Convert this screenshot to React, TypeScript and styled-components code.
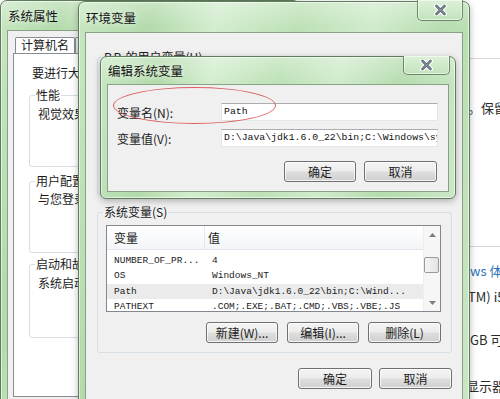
import React from 'react';
import styled, { createGlobalStyle } from 'styled-components';

const Global = createGlobalStyle`
  html, body { margin: 0; padding: 0; background: #fff; }
  body {
    font-family: "Noto Sans CJK SC", "Noto Sans", sans-serif;
    font-size: 12px;
    color: #1b1b1b;
  }
`;

const CJK = `"Noto Sans CJK SC", "Noto Sans", sans-serif`;
const MONO = `"Liberation Mono", "DejaVu Sans Mono", monospace`;

const Desktop = styled.div`
  position: relative;
  width: 500px;
  height: 399px;
  overflow: hidden;
  background: #fff;
`;

/* ---------- background control-panel page ---------- */
const Page = styled.div`
  position: absolute;
  left: 462px;
  top: 0;
  width: 60px;
  height: 399px;
  background: #fff;
  display: flex;
  flex-direction: column;
  font-family: ${CJK};
  font-size: 13px;
  color: #2a2a2a;
`;
const PageRule = styled.div<{ $mt: number }>`
  margin-top: ${p => p.$mt}px;
  height: 1px;
  background: #d6d6d6;
  flex: none;
`;
const PageText = styled.div<{ $mt: number; $ml: number; $blue?: boolean }>`
  margin-top: ${p => p.$mt}px;
  margin-left: ${p => p.$ml}px;
  height: 16px;
  line-height: 16px;
  white-space: nowrap;
  color: ${p => (p.$blue ? '#2f73b7' : '#2a2a2a')};
  flex: none;
`;

/* ---------- window chrome ---------- */
const Frame = styled.section<{ $x: number; $y: number; $w: number; $h: number }>`
  position: absolute;
  left: ${p => p.$x}px;
  top: ${p => p.$y}px;
  width: ${p => p.$w}px;
  height: ${p => p.$h}px;
  box-sizing: border-box;
  border: 1px solid #5f7d5c;
  border-radius: 7px 7px 6px 6px;
  padding: 0 6px 6px 6px;
  display: flex;
  flex-direction: column;
  background:
    linear-gradient(180deg, rgba(255, 255, 255, 0.3), rgba(255, 255, 255, 0) 26px),
    linear-gradient(100deg, #c8e7c3 0%, #b2daaa 16%, #d3edcf 30%, #bde1b6 48%, #d0ebcc 64%, #b6dcaf 80%, #cbe8c6 100%);
  box-shadow: inset 0 0 0 1px rgba(255, 255, 255, 0.55), 0 2px 7px rgba(0, 0, 0, 0.28);
`;

const TitleBar = styled.header<{ $h: number }>`
  height: ${p => p.$h}px;
  flex: none;
  display: flex;
  align-items: center;
  padding-left: 1px;
  font-family: ${CJK};
  font-size: 12.5px;
  color: #111;
  text-shadow: 0 0 6px rgba(255, 255, 255, 0.9);
`;

const CloseButton = styled.div<{ $right: number; $top: number; $w: number; $h: number }>`
  position: absolute;
  right: ${p => p.$right}px;
  top: ${p => p.$top}px;
  width: ${p => p.$w}px;
  height: ${p => p.$h}px;
  box-sizing: border-box;
  border: 1px solid #6b8868;
  border-top: none;
  border-radius: 0 0 5px 5px;
  background: linear-gradient(180deg, #dcf1d8, #c1e3bb);
  box-shadow: inset 0 0 0 1px rgba(255, 255, 255, 0.55);
  display: flex;
  align-items: center;
  justify-content: center;
`;

const Client = styled.div`
  flex: 1;
  min-height: 0;
  box-sizing: border-box;
  border: 1px solid #87a385;
  background: #f0f0f0;
  display: flex;
  flex-direction: column;
  overflow: hidden;
`;

const CloseGlyph = () => (
  <svg width="15" height="12" viewBox="0 0 15 12">
    <path d="M3.5 2 L11.5 10 M11.5 2 L3.5 10" stroke="#ffffff" strokeWidth="5" strokeLinecap="round" />
    <path d="M3.5 2 L11.5 10 M11.5 2 L3.5 10" stroke="#5d6a73" strokeWidth="2.6" strokeLinecap="round" />
    <path d="M3.5 2 L11.5 10 M11.5 2 L3.5 10" stroke="#9aa6ad" strokeWidth="0.9" strokeLinecap="round" />
  </svg>
);

/* ---------- controls ---------- */
const Button = styled.button<{ $w: number }>`
  width: ${p => p.$w}px;
  height: 21px;
  flex: none;
  box-sizing: border-box;
  padding: 0;
  border: 1px solid #707070;
  border-radius: 3px;
  background: linear-gradient(180deg, #f4f4f4 0%, #ececec 48%, #dedede 52%, #d0d0d0 100%);
  box-shadow: inset 0 0 0 1px rgba(255, 255, 255, 0.75);
  font-family: ${CJK};
  font-size: 12px;
  color: #1b1b1b;
  line-height: 19px;
`;

const ButtonRow = styled.div<{ $mt: number; $pr: number; $gap: number }>`
  display: flex;
  justify-content: flex-end;
  gap: ${p => p.$gap}px;
  margin-top: ${p => p.$mt}px;
  padding-right: ${p => p.$pr}px;
  flex: none;
`;

const Group = styled.fieldset<{ $h: number; $pl: number; $pr: number; $mt?: number }>`
  margin: ${p => p.$mt || 0}px 0 0 0;
  height: ${p => p.$h}px;
  box-sizing: border-box;
  flex: none;
  border: 1px solid #d5dfe5;
  border-radius: 3px;
  padding: 0 ${p => p.$pr}px 0 ${p => p.$pl}px;
  min-width: 0;
`;

const Legend = styled.legend<{ $ml: number }>`
  padding: 0 1px;
  margin-left: ${p => p.$ml}px;
  line-height: 14px;
  font-family: ${CJK};
  font-size: 12px;
  white-space: nowrap;
  color: #1b1b1b;
`;

/* ---------- system properties (behind) ---------- */
const SysClient = styled(Client)`
  padding: 6px 0 0 5px;
`;
const Tabs = styled.div`
  display: flex;
  height: 16px;
  margin-left: 2px;
  flex: none;
`;
const Tab = styled.div<{ $active?: boolean }>`
  box-sizing: border-box;
  height: 16px;
  padding: 0 5px;
  border: 1px solid #898c95;
  border-bottom: none;
  border-radius: 2px 2px 0 0;
  background: ${p => (p.$active ? '#ffffff' : 'linear-gradient(#f3f3f3, #e4e4e4)')};
  line-height: 14px;
  font-family: ${CJK};
  font-size: 12px;
  white-space: nowrap;
`;
const TabPanel = styled.div`
  height: 344px;
  flex: none;
  box-sizing: border-box;
  border: 1px solid #898c95;
  background: #fff;
  padding: 12px 0 0 15px;
  display: flex;
  flex-direction: column;
  overflow: hidden;
`;
const Line = styled.div<{ $mt?: number; $ml?: number }>`
  margin-top: ${p => p.$mt || 0}px;
  margin-left: ${p => p.$ml || 0}px;
  line-height: 14px;
  height: 14px;
  white-space: nowrap;
  font-family: ${CJK};
  font-size: 12px;
  color: #1b1b1b;
`;
const SysGroup = styled(Group)`
  width: 300px;
`;

/* ---------- environment variables ---------- */
const EnvBody = styled.div`
  padding: 17px 10px 0 11px;
  display: flex;
  flex-direction: column;
`;

const ListView = styled.div`
  width: 335px;
  height: 87px;
  margin-top: 6px;
  box-sizing: border-box;
  border: 1px solid #828790;
  background: #fff;
  display: grid;
  grid-template-columns: 1fr 17px;
  overflow: hidden;
  flex: none;
`;
const ListMain = styled.div`
  overflow: hidden;
  display: flex;
  flex-direction: column;
`;
const HeaderRow = styled.div`
  display: grid;
  grid-template-columns: 98px 1fr;
  height: 24px;
  flex: none;
  box-sizing: border-box;
  border-bottom: 1px solid #e3e6ea;
  background: linear-gradient(180deg, #ffffff, #f3f5f8);
  margin-bottom: 2.5px;
`;
const HeaderCell = styled.div<{ $pl: number; $divider?: boolean }>`
  display: flex;
  align-items: center;
  padding-left: ${p => p.$pl}px;
  border-right: ${p => (p.$divider ? '1px solid #e3e6ea' : 'none')};
  font-family: ${CJK};
  font-size: 12px;
  color: #1b1b1b;
`;
const Row = styled.div<{ $sel?: boolean }>`
  display: grid;
  grid-template-columns: 98px 1fr;
  height: 15.5px;
  flex: none;
  align-items: center;
  background: ${p => (p.$sel ? '#ebebeb' : 'transparent')};
  font-family: ${MONO};
  font-size: 9.5px;
  color: #1b1b1b;
  white-space: nowrap;
`;
const Cell = styled.div<{ $pl: number }>`
  padding-left: ${p => p.$pl}px;
  overflow: hidden;
`;
const ScrollBar = styled.div`
  display: flex;
  flex-direction: column;
  background: #f6f6f6;
  border-left: 1px solid #eeeeee;
`;
const ScrollArrow = styled.div`
  height: 17px;
  flex: none;
  display: flex;
  align-items: center;
  justify-content: center;
`;
const ScrollTrack = styled.div`
  flex: 1;
  padding: 14px 0 0 0;
`;
const Thumb = styled.div`
  width: 15px;
  height: 16px;
  box-sizing: border-box;
  border: 1px solid #9a9a9a;
  border-radius: 2px;
  background: linear-gradient(90deg, #f5f5f5, #e3e3e3);
`;

/* ---------- edit dialog ---------- */
const EditGrid = styled.div`
  display: grid;
  grid-template-columns: 104px 217px;
  grid-auto-rows: 18px;
  row-gap: 8px;
  padding: 18px 0 0 9px;
  align-items: center;
`;
const FieldLabel = styled.label`
  font-family: ${CJK};
  font-size: 12px;
  color: #1b1b1b;
  white-space: nowrap;
`;
const TextBox = styled.div`
  height: 18px;
  box-sizing: border-box;
  border: 1px solid #e2e7ec;
  border-top-color: #abadb3;
  background: #fff;
  padding-left: 2px;
  font-family: ${MONO};
  font-size: 9.8px;
  line-height: 16px;
  white-space: nowrap;
  overflow: hidden;
  color: #111;
`;
const Annotation = styled.div`
  position: absolute;
  left: 12px;
  top: 30px;
  width: 163px;
  height: 37px;
  box-sizing: border-box;
  border: 1.3px solid rgba(214, 70, 70, 0.85);
  border-radius: 50%;
  pointer-events: none;
`;

const Arrow = ({ up }: { up?: boolean }) => (
  <svg width="7" height="4" viewBox="0 0 7 4">
    <path d={up ? 'M0 4 L3.5 0 L7 4 Z' : 'M0 0 L3.5 4 L7 0 Z'} fill="#7d7d7d" />
  </svg>
);

const rows = [
  { n: 'NUMBER_OF_PR...', v: '4' },
  { n: 'OS', v: 'Windows_NT' },
  { n: 'Path', v: 'D:\\Java\\jdk1.6.0_22\\bin;C:\\Wind...', sel: true },
  { n: 'PATHEXT', v: '.COM;.EXE;.BAT;.CMD;.VBS;.VBE;.JS' },
  { n: 'PROCESSOR_AR...', v: 'x86' },
];

export default function App() {
  return (
    <Desktop>
      <Global />

      <Page>
        <PageRule $mt={58} />
        <PageText $mt={41} $ml={6}>。保留</PageText>
        <PageRule $mt={130} />
        <PageText $mt={16} $ml={8} $blue>ws 体验</PageText>
        <PageText $mt={10} $ml={6}>TM) i5</PageText>
        <PageText $mt={27} $ml={8}>GB 可用</PageText>
        <PageText $mt={30} $ml={4}>显示器</PageText>
      </Page>

      {/* 系统属性 */}
      <Frame $x={0} $y={0} $w={300} $h={430}>
        <TitleBar $h={29}>系统属性</TitleBar>
        <SysClient>
          <Tabs>
            <Tab $active>计算机名</Tab>
            <Tab>硬件</Tab>
          </Tabs>
          <TabPanel>
            <Line $ml={3}>要进行大多数更改，您必须作为管理员登录。</Line>
            <SysGroup $mt={8} $h={79} $pl={8} $pr={8}>
              <Legend $ml={-3}>性能</Legend>
              <Line $mt={5}>视觉效果，处理器计划，内存使用，以及虚拟内存</Line>
            </SysGroup>
            <SysGroup $mt={7} $h={79} $pl={8} $pr={8}>
              <Legend $ml={-3}>用户配置文件</Legend>
              <Line $mt={4}>与您登录有关的桌面设置</Line>
            </SysGroup>
            <SysGroup $mt={4} $h={81} $pl={8} $pr={8}>
              <Legend $ml={-3}>启动和故障恢复</Legend>
              <Line $mt={5}>系统启动、系统失败和调试信息</Line>
            </SysGroup>
          </TabPanel>
        </SysClient>
      </Frame>

      {/* 环境变量 */}
      <Frame $x={78} $y={1} $w={392} $h={430}>
        <TitleBar $h={30}>环境变量</TitleBar>
        <CloseButton $right={6} $top={-2} $w={46} $h={21}>
          <CloseGlyph />
        </CloseButton>
        <Client>
          <EnvBody>
            <Group $h={145} $pl={8} $pr={9}>
              <Legend $ml={-3}>P.P. 的用户变量(U)</Legend>
            </Group>
            <Group $mt={10} $h={148} $pl={8} $pr={9}>
              <Legend $ml={-3}>系统变量(S)</Legend>
              <ListView>
                <ListMain>
                  <HeaderRow>
                    <HeaderCell $pl={7} $divider>变量</HeaderCell>
                    <HeaderCell $pl={3}>值</HeaderCell>
                  </HeaderRow>
                  {rows.map(r => (
                    <Row key={r.n} $sel={r.sel}>
                      <Cell $pl={7}>{r.n}</Cell>
                      <Cell $pl={7}>{r.v}</Cell>
                    </Row>
                  ))}
                </ListMain>
                <ScrollBar>
                  <ScrollArrow>
                    <Arrow up />
                  </ScrollArrow>
                  <ScrollTrack>
                    <Thumb />
                  </ScrollTrack>
                  <ScrollArrow>
                    <Arrow />
                  </ScrollArrow>
                </ScrollBar>
              </ListView>
              <ButtonRow $mt={10} $pr={1} $gap={9}>
                <Button $w={72}>新建(W)...</Button>
                <Button $w={72}>编辑(I)...</Button>
                <Button $w={73}>删除(L)</Button>
              </ButtonRow>
            </Group>
            <ButtonRow $mt={15} $pr={0} $gap={7}>
              <Button $w={74}>确定</Button>
              <Button $w={73}>取消</Button>
            </ButtonRow>
          </EnvBody>
        </Client>
      </Frame>

      {/* 编辑系统变量 */}
      <Frame $x={100} $y={56} $w={356} $h={143}>
        <TitleBar $h={27}>编辑系统变量</TitleBar>
        <CloseButton $right={5} $top={-1} $w={47} $h={19}>
          <CloseGlyph />
        </CloseButton>
        <Client>
          <EditGrid>
            <FieldLabel>变量名(N):</FieldLabel>
            <TextBox>Path</TextBox>
            <FieldLabel>变量值(V):</FieldLabel>
            <TextBox>D:\Java\jdk1.6.0_22\bin;C:\Windows\system32</TextBox>
          </EditGrid>
          <ButtonRow $mt={14} $pr={11} $gap={8}>
            <Button $w={72}>确定</Button>
            <Button $w={73}>取消</Button>
          </ButtonRow>
        </Client>
        <Annotation />
      </Frame>
    </Desktop>
  );
}
